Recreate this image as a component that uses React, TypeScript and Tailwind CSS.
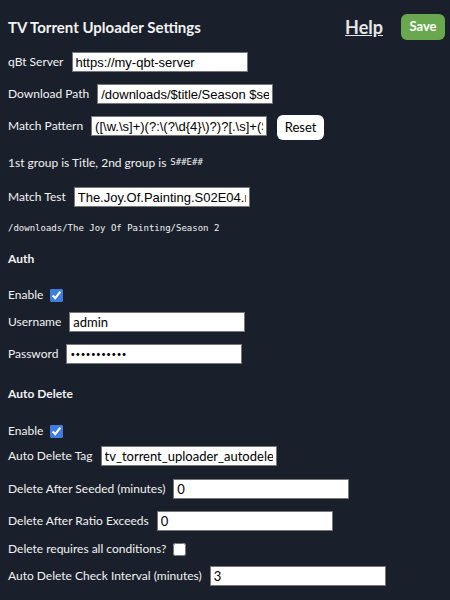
const labelFont = "font-['Lato','Noto_Sans',sans-serif]";

function Row({ label, value, mt, arial, dots }: { label: string; value: string; mt: string; arial?: boolean; dots?: boolean }) {
  const font = arial
    ? "text-[13px] font-['Liberation_Sans',Arial,sans-serif]"
    : dots
    ? "text-[8px] tracking-[0.5px] font-['Lato',sans-serif]"
    : "text-[13px] font-['Lato',sans-serif]";
  return (
    <div className={`flex items-center h-5 ${mt}`}>
      <span className="text-[12px] mr-2 whitespace-nowrap">{label}</span>
      <input
        readOnly
        value={value}
        className={`w-[176px] h-5 bg-white text-black border border-[#767676] px-[3px] outline-none ${font}`}
      />
    </div>
  );
}

function Check({ label, checked, mt }: { label: string; checked: boolean; mt: string }) {
  return (
    <div className={`flex items-center h-5 ${mt}`}>
      <span className="text-[12px] mr-[7px]">{label}</span>
      <input type="checkbox" readOnly checked={checked} className="w-[13px] h-[13px] m-0 accent-[#3b7de0]" />
    </div>
  );
}

export default function App() {
  return (
    <div className={`w-[450px] h-[600px] bg-[#1a202b] text-[#f2f2f2] pl-2 overflow-hidden ${labelFont}`}>
      <div className="flex items-center justify-between pt-[14px] pr-[5px] h-[40px]">
        <h1 className="text-[15px] font-bold">TV Torrent Uploader Settings</h1>
        <div className="flex items-center gap-[18px]">
          <a className="text-[18px] font-bold underline text-[#e6e6e6]">Help</a>
          <button className="w-[44px] h-[26px] rounded-md bg-[#6aa84f] text-white text-[13px] font-bold">Save</button>
        </div>
      </div>

      <Row label="qBt Server" value="https://my-qbt-server" mt="mt-3" arial />
      <Row label="Download Path" value="/downloads/$title/Season $season" mt="mt-3" arial />
      <div className="flex items-start h-5 mt-3">
        <span className="text-[12px] mr-2 self-center">Match Pattern</span>
        <input
          readOnly
          value="([\w.\s]+)(?:\(?\d{4}\)?)?[.\s]+(S\d+E\d+)"
          className="w-[176px] h-5 bg-white text-black border border-[#767676] px-[3px] text-[13px] outline-none font-['Liberation_Sans',Arial,sans-serif]"
        />
        <button className="ml-[10px] -mt-px w-[47px] h-[25px] rounded-md bg-white text-black text-[13px]">Reset</button>
      </div>

      <div className="flex items-center h-5 mt-[17px] text-[12px]">
        <span>1st group is Title, 2nd group is</span>
        <code className="ml-1 text-[9px] font-['DejaVu_Sans_Mono',monospace]">S##E##</code>
      </div>

      <Row label="Match Test" value="The.Joy.Of.Painting.S02E04.mkv" mt="mt-[14px]" arial />

      <div className="flex items-center h-5 mt-3 text-[9px] font-['DejaVu_Sans_Mono',monospace]">
        /downloads/The Joy Of Painting/Season 2
      </div>

      <h2 className="flex items-center h-5 mt-[10px] text-[12px] font-bold">Auth</h2>
      <Check label="Enable" checked mt="mt-4" />
      <Row label="Username" value="admin" mt="mt-[7px]" />
      <Row label="Password" value="•••••••••••" mt="mt-3" dots />

      <h2 className="flex items-center h-5 mt-5 text-[12px] font-bold">Auto Delete</h2>
      <Check label="Enable" checked mt="mt-[17px]" />
      <Row label="Auto Delete Tag" value="tv_torrent_uploader_autodelete" mt="mt-[5px]" />
      <Row label="Delete After Seeded (minutes)" value="0" mt="mt-[13px]" />
      <Row label="Delete After Ratio Exceeds" value="0" mt="mt-3" />
      <Check label="Delete requires all conditions?" checked={false} mt="mt-2" />
      <Row label="Auto Delete Check Interval (minutes)" value="3" mt="mt-[7px]" />
    </div>
  );
}
